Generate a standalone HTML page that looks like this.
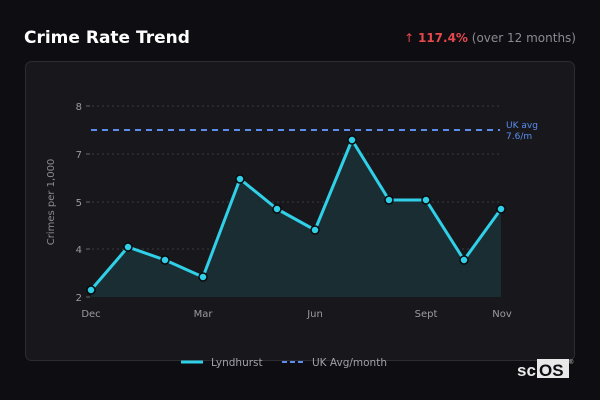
<!DOCTYPE html>
<html><head><style>
body{margin:0;width:600px;height:400px;background:#0e0d12;overflow:hidden;font-family:"DejaVu Sans","Liberation Sans",sans-serif;}
</style></head><body>
<svg width="600" height="400" xmlns="http://www.w3.org/2000/svg" style="position:absolute;left:0;top:0">
<text x="24" y="43" fill="#fff" font-size="17" font-weight="bold" font-family="DejaVu Sans, sans-serif">Crime Rate Trend</text>
<text x="576" y="42" text-anchor="end" font-size="12" font-family="DejaVu Sans, sans-serif"><tspan fill="#e5484d">↑ </tspan><tspan fill="#e5484d" font-weight="bold">117.4%</tspan><tspan fill="#8a8a90"> (over 12 months)</tspan></text>
<rect x="25.5" y="61.5" width="549" height="299" rx="6" fill="#18181c" stroke="#2c2c31"/>
<g stroke="#3a3a40" stroke-dasharray="2,3" stroke-width="1">
<line x1="92" y1="106" x2="500" y2="106"/><line x1="92" y1="154" x2="500" y2="154"/>
<line x1="92" y1="202" x2="500" y2="202"/><line x1="92" y1="249" x2="500" y2="249"/>
</g>
<g stroke="#666" stroke-width="1"><line x1="86" y1="106" x2="90" y2="106"/><line x1="86" y1="154" x2="90" y2="154"/><line x1="86" y1="202" x2="90" y2="202"/><line x1="86" y1="249" x2="90" y2="249"/><line x1="86" y1="297" x2="90" y2="297"/></g>
<g fill="#9a9aa0" font-size="10" text-anchor="end" font-family="DejaVu Sans, sans-serif">
<text x="82" y="110">8</text><text x="82" y="158">7</text><text x="82" y="206">5</text><text x="82" y="253">4</text><text x="82" y="301">2</text></g>
<text transform="translate(54,202) rotate(-90)" text-anchor="middle" fill="#8a8a90" font-size="10" font-family="DejaVu Sans, sans-serif">Crimes per 1,000</text>
<polygon points="91,290 128,247 165,260 203,277 240,179 277,209 315,230 352,140 389,200 426,200 464,260 501,209 501,297 91,297" fill="#1a2d33"/>
<line x1="91" y1="130" x2="500" y2="130" stroke="#5b8def" stroke-width="2" stroke-dasharray="6,5"/>
<text x="506" y="128" fill="#5b8def" font-size="9" font-family="DejaVu Sans, sans-serif">UK avg</text>
<text x="506" y="139" fill="#5b8def" font-size="9" font-family="DejaVu Sans, sans-serif">7.6/m</text>
<polyline points="91,290 128,247 165,260 203,277 240,179 277,209 315,230 352,140 389,200 426,200 464,260 501,209" fill="none" stroke="#2fd0e8" stroke-width="3" stroke-linejoin="round"/>
<g fill="#2fd0e8" stroke="#0a0a0c" stroke-width="1.5">
<circle cx="91" cy="290" r="4"/><circle cx="128" cy="247" r="4"/><circle cx="165" cy="260" r="4"/><circle cx="203" cy="277" r="4"/><circle cx="240" cy="179" r="4"/><circle cx="277" cy="209" r="4"/><circle cx="315" cy="230" r="4"/><circle cx="352" cy="140" r="4"/><circle cx="389" cy="200" r="4"/><circle cx="426" cy="200" r="4"/><circle cx="464" cy="260" r="4"/><circle cx="501" cy="209" r="4"/></g>
<g fill="#9a9aa0" font-size="10" text-anchor="middle" font-family="DejaVu Sans, sans-serif">
<text x="91" y="317">Dec</text><text x="203" y="317">Mar</text><text x="315" y="317">Jun</text><text x="426" y="317">Sept</text><text x="502" y="317">Nov</text></g>
<line x1="181" y1="362" x2="203" y2="362" stroke="#2fd0e8" stroke-width="3"/>
<text x="211" y="366" fill="#a0a0a6" font-size="10.5" font-family="DejaVu Sans, sans-serif">Lyndhurst</text>
<line x1="282" y1="362" x2="304" y2="362" stroke="#5b8def" stroke-width="2" stroke-dasharray="5,3"/>
<text x="312" y="366" fill="#a0a0a6" font-size="10.5" font-family="DejaVu Sans, sans-serif">UK Avg/month</text>
<text x="517" y="376" fill="#e8e8e8" font-size="17" font-weight="bold" font-family="Liberation Sans, sans-serif">sc</text>
<rect x="537" y="359" width="32" height="19" fill="#e8e8e8"/>
<text x="539" y="376" fill="#0e0d12" font-size="17" font-weight="bold" font-family="Liberation Sans, sans-serif">OS</text>
<text x="569" y="364" fill="#ccc" font-size="6" font-family="Liberation Sans, sans-serif">®</text>
</svg>
</body></html>
